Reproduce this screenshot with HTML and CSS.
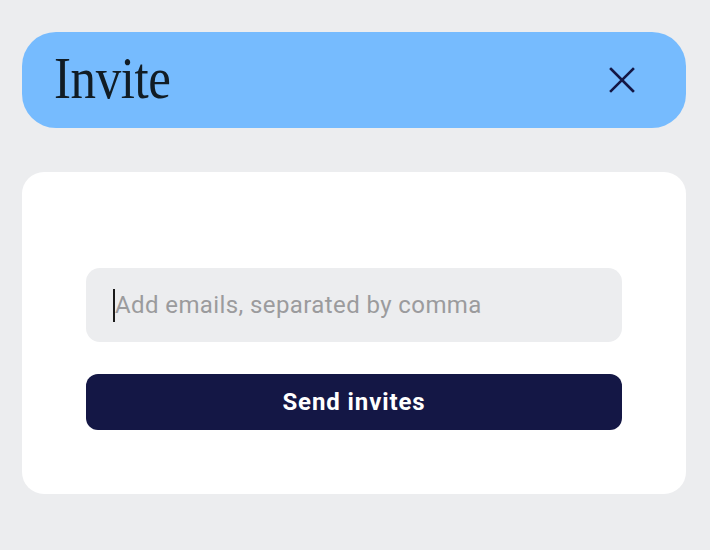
FILE: index.html
```html
<!DOCTYPE html>
<html>
<head>
<meta charset="utf-8">
<link rel="stylesheet" href="styles.css">
</head>
<body>
<div class="page">
  <header class="header">
    <h1 class="title">Invite</h1>
    <button class="close" aria-label="Close">
      <svg width="26" height="26" viewBox="0 0 26 26"><path d="M2 2 L24 24 M24 2 L2 24" stroke="#141745" stroke-width="2.6" stroke-linecap="square" fill="none"/></svg>
    </button>
  </header>
  <section class="card">
    <div class="field"><span class="caret"></span><span class="placeholder">Add emails, separated by comma</span></div>
    <button class="send">Send invites</button>
  </section>
</div>
</body>
</html>
```
FILE: styles.css
```css
html, body { margin: 0; padding: 0; }
body { background: #ecedef; width: 710px; height: 550px; overflow: hidden; font-family: Roboto, "Liberation Sans", sans-serif; }
.page { padding: 32px 24px 0 22px; display: flex; flex-direction: column; gap: 44px; }
.header {
  height: 96px; background: #76bbfe; border-radius: 34px;
  display: flex; align-items: center; justify-content: space-between;
  padding: 0 51px 0 32px; box-sizing: border-box;
}
.title {
  margin: 0; font-family: "Liberation Serif", serif; font-weight: 400;
  font-size: 60px; letter-spacing: -0.5px; color: #111c24; line-height: 1;
  position: relative; top: -2px;
  transform: scaleX(0.85); transform-origin: left center;
}
.close { background: none; border: 0; padding: 0; width: 26px; height: 26px; display: block; }
.close svg { display: block; }
.card {
  background: #fff; border-radius: 22px; height: 322px; box-sizing: border-box;
  padding: 96px 64px 64px; display: flex; flex-direction: column; gap: 32px;
}
.field {
  height: 74px; background: #ecedef; border-radius: 14px; box-sizing: border-box;
  display: flex; align-items: center; padding-left: 27px;
}
.caret { width: 2px; height: 33px; background: #1a1a1a; }
.placeholder { color: #9b9b9d; font-size: 24px; letter-spacing: 0.4px; }
.send {
  height: 56px; background: #141745; color: #fff; border: 0; border-radius: 12px;
  font-family: Roboto, "Liberation Sans", sans-serif; font-weight: 700; font-size: 24px;
  letter-spacing: 0.9px; padding: 0;
}
```
